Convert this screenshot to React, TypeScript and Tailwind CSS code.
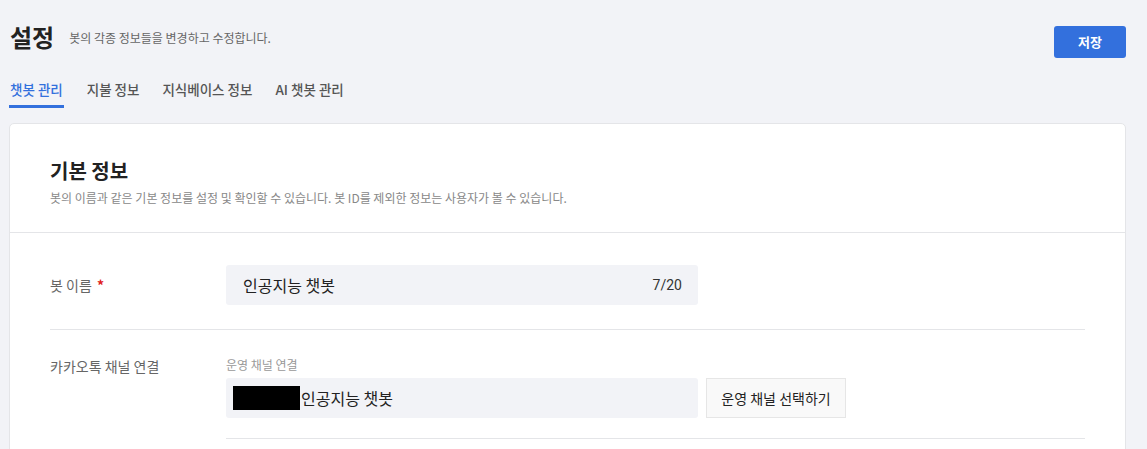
import React from "react";

const font = { fontFamily: '"Noto Sans CJK KR", "Noto Sans", Roboto, sans-serif' };

export default function App() {
  return (
    <div className="min-h-[449px] w-full bg-[#f2f3f7] text-[#222]" style={font}>
      <div className="pl-[9px] pr-[21px]">
        {/* Header */}
        <div className="flex justify-between items-start">
          <div className="flex items-center pt-[21px] pl-px">
            <h1 className="text-[24px] leading-[32px] font-bold text-[#222]">설정</h1>
            <p className="ml-[15px] mt-[1px] text-[12px] leading-[16px] text-[#666]">봇의 각종 정보들을 변경하고 수정합니다.</p>
          </div>
          <button className="mt-[26px] w-[72px] h-[32px] rounded-[3px] bg-[#3370dd] text-white text-[13px] font-bold">저장</button>
        </div>
        {/* Tabs */}
        <div className="flex items-end gap-[23px] mt-[21px] text-[13.5px] leading-[20px] font-medium">
          <div className="flex flex-col">
            <span className="px-px text-[#3370dd]">챗봇 관리</span>
            <span className="mt-[6px] h-[3px] bg-[#3370dd]" />
          </div>
          <div className="flex flex-col">
            <span className="text-[#555]">지불 정보</span>
            <span className="mt-[6px] h-[3px]" />
          </div>
          <div className="flex flex-col">
            <span className="text-[#555]">지식베이스 정보</span>
            <span className="mt-[6px] h-[3px]" />
          </div>
          <div className="flex flex-col">
            <span className="text-[#555]">AI 챗봇 관리</span>
            <span className="mt-[6px] h-[3px]" />
          </div>
        </div>
        {/* Card */}
        <div className="mt-[15px] bg-white border border-[#e4e5e8] rounded-[5px]">
          <div className="px-[40px] pt-[33px] pb-[26px] border-b border-[#e4e5e8]">
            <h2 className="text-[20px] leading-[28px] font-bold text-[#222]">기본 정보</h2>
            <p className="mt-[5px] text-[12px] leading-[16px] text-[#888]">봇의 이름과 같은 기본 정보를 설정 및 확인할 수 있습니다. 봇 ID를 제외한 정보는 사용자가 볼 수 있습니다.</p>
          </div>
          <div className="px-[40px]">
            <div className="flex items-center pt-[32px] pb-[24px] border-b border-[#e4e5e8]">
              <div className="w-[176px] text-[14px] text-[#666]">
                봇 이름 <span className="text-[#e02020] font-bold ml-[2px]">*</span>
              </div>
              <div className="w-[472px] h-[40px] bg-[#f2f3f7] rounded-[3px] flex items-center justify-between pl-[17px] pr-[16px]">
                <span className="text-[16px] text-[#222]">인공지능 챗봇</span>
                <span className="text-[14px] text-[#333]" style={{ fontFamily: "Roboto, sans-serif" }}>7/20</span>
              </div>
            </div>
            <div className="flex items-start pt-[25px]">
              <div className="w-[176px] text-[14px] leading-[20px] text-[#666] pt-[1px]">카카오톡 채널 연결</div>
              <div className="flex-1">
                <div className="text-[12px] leading-[18px] text-[#999] pt-[1px]">운영 채널 연결</div>
                <div className="flex gap-[8px] mt-[4px]">
                  <div className="w-[472px] h-[40px] bg-[#f2f3f7] rounded-[3px] flex items-center pl-[7px]">
                    <span className="w-[67px] h-[24px] bg-black" />
                    <span className="ml-px text-[16px] text-[#222]">인공지능 챗봇</span>
                  </div>
                  <button className="w-[140px] h-[40px] bg-[#f9f9f9] border border-[#e6e6e6] text-[14px] text-[#222]">운영 채널 선택하기</button>
                </div>
                <div className="mt-[20px] border-b border-[#e4e5e8]" />
                <div className="h-[40px]" />
              </div>
            </div>
          </div>
        </div>
      </div>
    </div>
  );
}
